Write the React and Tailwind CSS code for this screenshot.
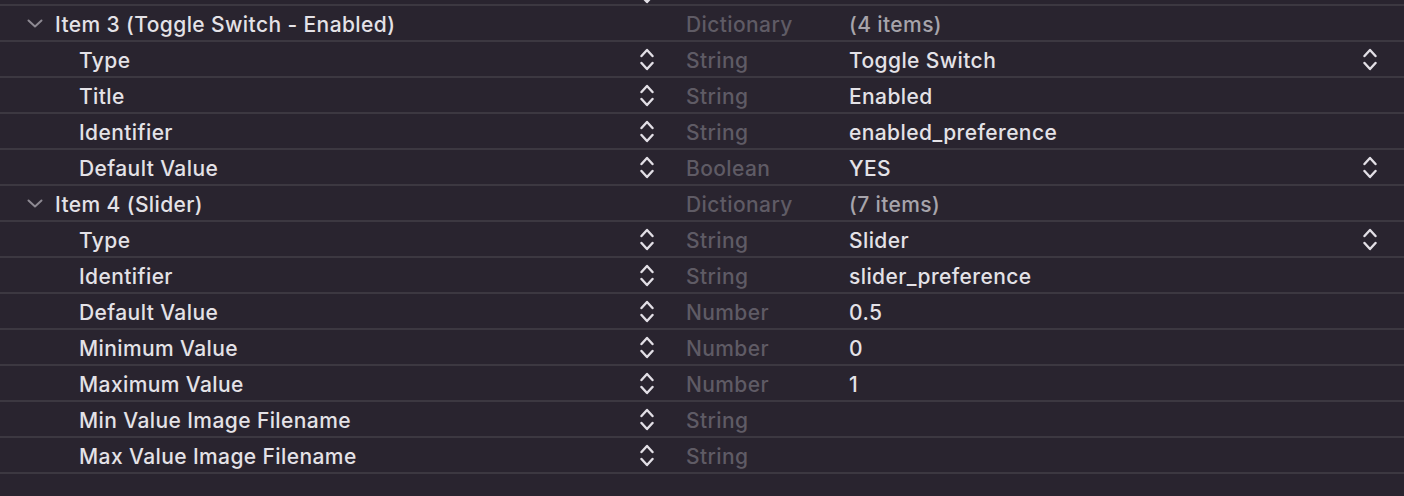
import React from "react";

const Stepper = () => (
  <svg width="14" height="23" viewBox="0 0 14 23" fill="none" stroke="#e2dfe6" strokeWidth="2.4" strokeLinecap="round" strokeLinejoin="round">
    <path d="M1.5 8 L7 2 L12.5 8" />
    <path d="M1.5 15 L7 21 L12.5 15" />
  </svg>
);

const Disclosure = () => (
  <svg width="16" height="9" viewBox="0 0 16 9" fill="none" stroke="#8d8992" strokeWidth="2" strokeLinecap="round" strokeLinejoin="round">
    <path d="M1.5 1.5 L8 7.5 L14.5 1.5" />
  </svg>
);

const rows = [
  { kind: "item", key: "Item 3 (Toggle Switch - Enabled)", type: "Dictionary", value: "(4 items)" },
  { key: "Type", type: "String", value: "Toggle Switch", popup: true },
  { key: "Title", type: "String", value: "Enabled" },
  { key: "Identifier", type: "String", value: "enabled_preference" },
  { key: "Default Value", type: "Boolean", value: "YES", popup: true },
  { kind: "item", key: "Item 4 (Slider)", type: "Dictionary", value: "(7 items)" },
  { key: "Type", type: "String", value: "Slider", popup: true },
  { key: "Identifier", type: "String", value: "slider_preference" },
  { key: "Default Value", type: "Number", value: "0.5" },
  { key: "Minimum Value", type: "Number", value: "0" },
  { key: "Maximum Value", type: "Number", value: "1" },
  { key: "Min Value Image Filename", type: "String", value: "" },
  { key: "Max Value Image Filename", type: "String", value: "" },
];

export default function App() {
  return (
    <div
      className="w-[1404px] h-[496px] bg-[#29242f] overflow-hidden text-[21px] font-medium tracking-[0.4px] text-[#e4e2e7]"
      style={{ fontFamily: "Inter, 'Noto Sans', sans-serif" }}
    >
      <div className="h-[4px] overflow-hidden flex items-end pl-[640px]">
        <div className="shrink-0 h-[23px] flex items-end">
          <Stepper />
        </div>
      </div>
      {rows.map((r, i) => {
        const isItem = r.kind === "item";
        return (
          <div key={i} className="border-t-2 border-[#3c3841] h-[36px] flex items-center">
            <div className="w-[640px] shrink-0 flex items-center">
              {isItem ? (
                <>
                  <div className="w-[27px] shrink-0" />
                  <div className="w-[28px] shrink-0 flex items-center pt-[1px]">
                    <Disclosure />
                  </div>
                  <span className="leading-none pt-[3px]">{r.key}</span>
                </>
              ) : (
                <span className="pl-[79px] leading-none pt-[3px]">{r.key}</span>
              )}
            </div>
            <div className="w-[46px] shrink-0 flex items-center">
              {!isItem && <Stepper />}
            </div>
            <div className="w-[163px] shrink-0 text-[#5f5b65] leading-none pt-[3px]">{r.type}</div>
            <div className={"flex-1 leading-none pt-[3px] " + (isItem ? "text-[#a7a4ab]" : "")}>{r.value}</div>
            <div className="w-[14px] mr-[27px] shrink-0 flex items-center">
              {r.popup && <Stepper />}
            </div>
          </div>
        );
      })}
      <div className="border-t-2 border-[#3c3841]" />
    </div>
  );
}
